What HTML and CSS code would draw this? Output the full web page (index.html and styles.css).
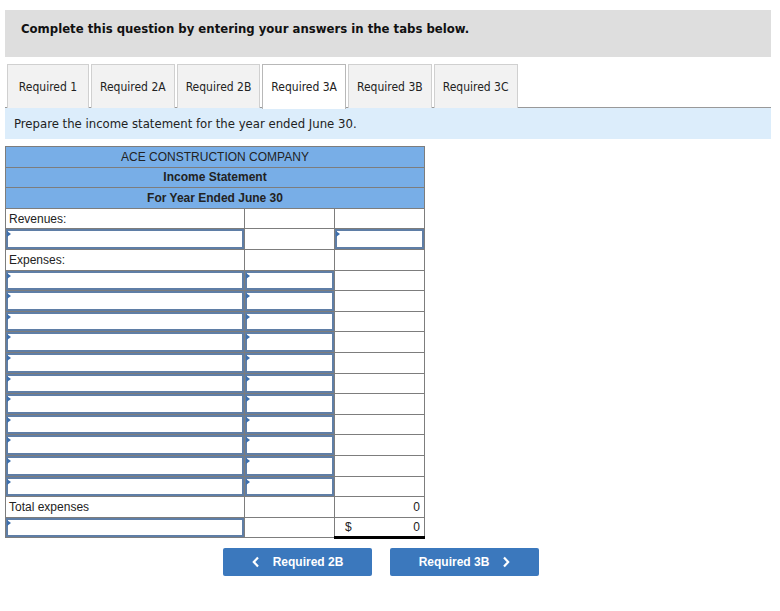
FILE: index.html
```html
<!DOCTYPE html>
<html>
<head>
<meta charset="utf-8">
<link rel="stylesheet" href="styles.css">
</head>
<body>
<div class="page">
  <div class="banner">Complete this question by entering your answers in the tabs below.</div>
  <div class="tabs">
    <div class="tab">Required 1</div>
    <div class="tab">Required 2A</div>
    <div class="tab">Required 2B</div>
    <div class="tab active">Required 3A</div>
    <div class="tab">Required 3B</div>
    <div class="tab">Required 3C</div>
  </div>
  <div class="instr">Prepare the income statement for the year ended June 30.</div>

  <table class="stmt">
    <colgroup><col class="c1"><col class="c2"><col class="c3"></colgroup>
    <tr class="hd"><td colspan="3">ACE CONSTRUCTION COMPANY</td></tr>
    <tr class="hd b"><td colspan="3">Income Statement</td></tr>
    <tr class="hd b"><td colspan="3">For Year Ended June 30</td></tr>
    <tr><td class="lbl">Revenues:</td><td></td><td></td></tr>
    <tr><td class="in"><div class="box"></div></td><td></td><td class="in"><div class="box"></div></td></tr>
    <tr><td class="lbl">Expenses:</td><td></td><td></td></tr>
    <tr><td class="in"><div class="box"></div></td><td class="in"><div class="box"></div></td><td></td></tr>
    <tr><td class="in"><div class="box"></div></td><td class="in"><div class="box"></div></td><td></td></tr>
    <tr><td class="in"><div class="box"></div></td><td class="in"><div class="box"></div></td><td></td></tr>
    <tr><td class="in"><div class="box"></div></td><td class="in"><div class="box"></div></td><td></td></tr>
    <tr><td class="in"><div class="box"></div></td><td class="in"><div class="box"></div></td><td></td></tr>
    <tr><td class="in"><div class="box"></div></td><td class="in"><div class="box"></div></td><td></td></tr>
    <tr><td class="in"><div class="box"></div></td><td class="in"><div class="box"></div></td><td></td></tr>
    <tr><td class="in"><div class="box"></div></td><td class="in"><div class="box"></div></td><td></td></tr>
    <tr><td class="in"><div class="box"></div></td><td class="in"><div class="box"></div></td><td></td></tr>
    <tr><td class="in"><div class="box"></div></td><td class="in"><div class="box"></div></td><td></td></tr>
    <tr><td class="in"><div class="box"></div></td><td class="in"><div class="box"></div></td><td></td></tr>
    <tr><td class="lbl">Total expenses</td><td class="topline"></td><td class="num">0</td></tr>
    <tr><td class="in"><div class="box"></div></td><td></td><td class="num total"><span class="dollar">$</span>0</td></tr>
  </table>

  <div class="nav">
    <button class="btn"><svg width="8" height="12" viewBox="0 0 8 12"><path d="M6 1.5 L1.8 6 L6 10.5" fill="none" stroke="#fff" stroke-width="2.2"/></svg><span>Required 2B</span></button>
    <button class="btn next"><span>Required 3B</span><svg width="8" height="12" viewBox="0 0 8 12"><path d="M2 1.5 L6.2 6 L2 10.5" fill="none" stroke="#fff" stroke-width="2.2"/></svg></button>
  </div>
</div>
</body>
</html>
```

FILE: styles.css
```css
* { box-sizing: border-box; }
body {
  margin: 0;
  background: #fff;
  font-family: "DejaVu Sans Condensed", "Noto Sans", sans-serif;
  color: #1a1a1a;
}
.page {
  padding: 10px 0 0 5px;
  width: 771px;
}
.banner {
  background: #dedede;
  height: 47px;
  padding: 11px 0 0 16px;
  font-weight: bold;
  font-size: 13px;
  line-height: 16px;
  color: #111;
}
.tabs {
  margin-top: 7px;
  display: flex;
  gap: 2px;
  padding-left: 2px;
  border-bottom: 1px solid #999;
  height: 44px;
}
.tab {
  height: 44px;
  min-width: 82px;
  padding: 0 8px;
  display: flex;
  align-items: center;
  justify-content: center;
  font-size: 12px;
  background: #f2f2f2;
  border: 1px solid #d0d0d0;
  border-bottom: none;
  color: #222;
}
.tab.active {
  background: #fff;
  border-color: #b8b8b8;
  height: 45px;
  margin-bottom: -1px;
}
.instr {
  background: #dcedfb;
  height: 31px;
  display: flex;
  align-items: center;
  padding-left: 9px;
  font-size: 13px;
  color: #222;
}
.stmt {
  margin-top: 7px;
  border-collapse: collapse;
  table-layout: fixed;
  width: 420px;
  font-family: "Liberation Sans", Arial, sans-serif;
  font-size: 12px;
  color: #222;
}
.c1 { width: 239px; }
.c2 { width: 90px; }
.c3 { width: 90px; }
.stmt td {
  border: 1px solid #7d7d7d;
  height: 20.6px;
  padding: 0;
  line-height: 14px;
}
.stmt tr.hd td {
  background: #78aee7;
  text-align: center;
}
.stmt tr.b td { font-weight: bold; }
.stmt td.lbl { padding-left: 3px; }
.stmt td.num { text-align: right; padding-right: 4px; }
.stmt td.topline { border-top: 1px solid #000; }
.stmt td.total {
  border-top: 1px solid #000;
  border-bottom: 3px solid #000;
}
.dollar {
  float: left;
  padding-left: 10px;
}
.box {
  height: 19.6px;
  border: 2px solid #5f7ea6;
  background: #fff;
  position: relative;
}
.box::before {
  content: "";
  position: absolute;
  left: -1px;
  top: 0;
  border-top: 3px solid transparent;
  border-bottom: 3px solid transparent;
  border-left: 4px solid #3d6fad;
}
.nav {
  margin-top: 9px;
  display: flex;
  gap: 18px;
  padding-left: 218px;
}
.btn {
  width: 149px;
  height: 28px;
  background: #3b78bd;
  border: none;
  border-radius: 2px;
  color: #fff;
  font-family: "Liberation Sans", Arial, sans-serif;
  font-weight: bold;
  font-size: 12px;
  display: flex;
  align-items: center;
  justify-content: center;
  gap: 13px;
  padding: 0;
}
```
